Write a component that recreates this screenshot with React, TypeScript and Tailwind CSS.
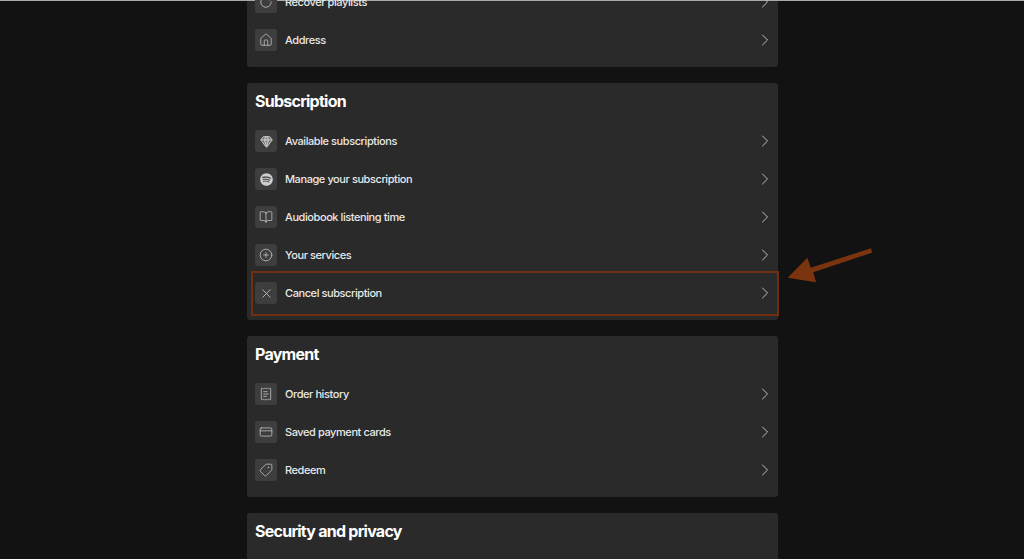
import { ChevronRight, RotateCw, House, Gem, BookOpen, CirclePlus, X, ReceiptText, CreditCard, Tag } from 'lucide-react';
import type { ReactNode } from 'react';
import { FaSpotify } from 'react-icons/fa';

function Row({ icon, label, highlighted }: { icon: ReactNode; label: string; highlighted?: boolean }) {
  return (
    <div className="relative flex items-center h-[38px]">
      <div className="w-[22px] h-[22px] rounded-[3px] bg-[#3e3e3e] flex items-center justify-center text-[#cfcfcf] shrink-0">
        {icon}
      </div>
      <span className="ml-2 flex-1 text-[11px] leading-none font-medium tracking-[-0.42px] text-[#e8e8e8]">{label}</span>
      <ChevronRight size={20} strokeWidth={1.2} className="-mr-[5px] text-[#bdbdbd]" />
      {/* highlight box from the annotation */}
      {highlighted && (
        <div className="absolute -left-1 -right-[9px] -top-[3px] h-[45px] border-2 border-[#70300f]" />
      )}
    </div>
  );
}

function Card({ title, children }: { title?: string; children: ReactNode }) {
  return (
    <section className="rounded-[3px] bg-[#2a2a2a] px-2 pt-2 pb-2">
      {title && (
        <h2 className="h-[31px] text-[16px] leading-5 font-bold tracking-[-0.75px] text-white">{title}</h2>
      )}
      {children}
    </section>
  );
}

export default function App() {
  return (
    <div className="relative h-[559px] overflow-hidden bg-[#121212] font-['Inter',sans-serif]">
      <div className="absolute inset-x-0 top-0 h-px bg-[#a9a9a9]" />
      <div className="w-[531px] ml-[247px] -mt-[25px] flex flex-col gap-4">
        <Card>
          <Row icon={<RotateCw size={14} strokeWidth={1.25} />} label="Recover playlists" />
          <Row icon={<House size={14} strokeWidth={1.25} />} label="Address" />
        </Card>
        <Card title="Subscription">
          <Row icon={<Gem size={13} strokeWidth={1.75} fill="currentColor" fillOpacity={0.35} />} label="Available subscriptions" />
          <Row icon={<FaSpotify size={13} />} label="Manage your subscription" />
          <Row icon={<BookOpen size={14} strokeWidth={1.25} />} label="Audiobook listening time" />
          <Row icon={<CirclePlus size={14} strokeWidth={1.25} />} label="Your services" />
          <Row icon={<X size={15} strokeWidth={1.25} />} label="Cancel subscription" highlighted />
        </Card>
        <Card title="Payment">
          <Row icon={<ReceiptText size={14} strokeWidth={1.25} />} label="Order history" />
          <Row icon={<CreditCard size={14} strokeWidth={1.25} />} label="Saved payment cards" />
          <Row icon={<Tag size={14} strokeWidth={1.25} className="-scale-x-100" />} label="Redeem" />
        </Card>
        <Card title="Security and privacy">
          <div className="h-[40px]" />
        </Card>
      </div>
      {/* annotation arrow */}
      <svg className="absolute left-[780px] top-[240px]" width="100" height="50" viewBox="0 0 100 50">
        <path d="M7.7 37.7 L27.3 17.7 L30.7 27.7 L91 8.3 L92 12.7 L33.3 32.3 L36 42.3 Z" fill="#7a3410" />
      </svg>
    </div>
  );
}
